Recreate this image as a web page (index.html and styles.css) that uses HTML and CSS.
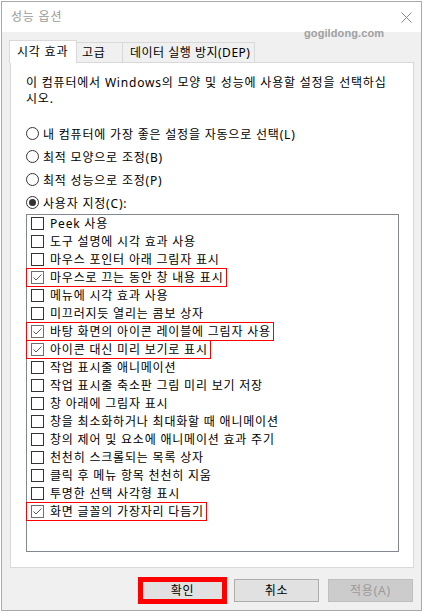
FILE: index.html
```html
<!DOCTYPE html>
<html lang="ko">

<head>
    <meta charset="UTF-8">
    <meta name="viewport" content="width=device-width, initial-scale=1.0">
    <title>성능 옵션</title>
    <link rel="stylesheet" href="styles.css">
</head>

<body>
    <div class="win">
        <div class="titlebar">
            <span class="title">성능 옵션</span>
            <svg class="close" width="11" height="11" viewBox="0 0 11 11">
                <path d="M0.5 0.5L10.5 10.5M10.5 0.5L0.5 10.5" stroke="#8a8a8a" stroke-width="1" fill="none" />
            </svg>
        </div>
        <div class="mark-site">gogildong.com</div>

        <div class="content">
            <div class="tabs">
                <div class="tab active">시각 효과</div>
                <div class="tab tab2">고급</div>
                <div class="tab tab3">데이터 실행 방지(DEP)</div>
            </div>
            <div class="panel">
                <p class="desc">이 컴퓨터에서 Windows의 모양 및 성능에 사용할 설정을 선택하십<br>시오.</p>

                <div class="radios">
                    <div class="radio"><span class="dot"></span>내 컴퓨터에 가장 좋은 설정을 자동으로 선택(L)</div>
                    <div class="radio"><span class="dot"></span>최적 모양으로 조정(B)</div>
                    <div class="radio"><span class="dot"></span>최적 성능으로 조정(P)</div>
                    <div class="radio on"><span class="dot"></span>사용자 지정(C):</div>
                </div>

                <ul class="list">
                    <li><span class="item"><span class="box"></span>Peek 사용</span></li>
                    <li><span class="item"><span class="box"></span>도구 설명에 시각 효과 사용</span></li>
                    <li><span class="item"><span class="box"></span>마우스 포인터 아래 그림자 표시</span></li>
                    <li><span class="item on"><span class="box"><svg width="11" height="11" viewBox="0 0 11 11"><path d="M1.5 5.5L4 8L9.5 2.5" stroke="#5a5a5a" stroke-width="1" fill="none" /></svg></span>마우스로 끄는 동안 창 내용 표시</span></li>
                    <li><span class="item"><span class="box"></span>메뉴에 시각 효과 사용</span></li>
                    <li><span class="item"><span class="box"></span>미끄러지듯 열리는 콤보 상자</span></li>
                    <li><span class="item on"><span class="box"><svg width="11" height="11" viewBox="0 0 11 11"><path d="M1.5 5.5L4 8L9.5 2.5" stroke="#5a5a5a" stroke-width="1" fill="none" /></svg></span>바탕 화면의 아이콘 레이블에 그림자 사용</span></li>
                    <li><span class="item on"><span class="box"><svg width="11" height="11" viewBox="0 0 11 11"><path d="M1.5 5.5L4 8L9.5 2.5" stroke="#5a5a5a" stroke-width="1" fill="none" /></svg></span>아이콘 대신 미리 보기로 표시</span></li>
                    <li><span class="item"><span class="box"></span>작업 표시줄 애니메이션</span></li>
                    <li><span class="item"><span class="box"></span>작업 표시줄 축소판 그림 미리 보기 저장</span></li>
                    <li><span class="item"><span class="box"></span>창 아래에 그림자 표시</span></li>
                    <li><span class="item"><span class="box"></span>창을 최소화하거나 최대화할 때 애니메이션</span></li>
                    <li><span class="item"><span class="box"></span>창의 제어 및 요소에 애니메이션 효과 주기</span></li>
                    <li><span class="item"><span class="box"></span>천천히 스크롤되는 목록 상자</span></li>
                    <li><span class="item"><span class="box"></span>클릭 후 메뉴 항목 천천히 지움</span></li>
                    <li><span class="item"><span class="box"></span>투명한 선택 사각형 표시</span></li>
                    <li><span class="item on"><span class="box"><svg width="11" height="11" viewBox="0 0 11 11"><path d="M1.5 5.5L4 8L9.5 2.5" stroke="#5a5a5a" stroke-width="1" fill="none" /></svg></span>화면 글꼴의 가장자리 다듬기</span></li>
                </ul>
            </div>

            <div class="buttons">
                <button class="btn ok">확인</button>
                <button class="btn">취소</button>
                <button class="btn off">적용(A)</button>
            </div>
        </div>
    </div>
</body>

</html>
```

FILE: styles.css
```css
* {
    padding: 0;
    margin: 0;
    box-sizing: border-box;
}

ul,
li {
    list-style: none;
}

body {
    background: #fff;
    font-family: "Noto Sans", "Noto Sans CJK KR", sans-serif;
    font-size: 12px;
    letter-spacing: 0.8px;
    color: #000;
}

.win {
    position: relative;
    width: 421px;
    height: 610px;
    margin: 1px 0 0 1px;
    border: 1px solid #a9a9a9;
    display: flex;
    flex-direction: column;
}

.titlebar {
    height: 30px;
    background: #fff;
    display: flex;
    align-items: center;
    justify-content: space-between;
    padding: 0 9px 0 9px;
}

.title {
    color: #9a9a9a;
    line-height: 16px;
}

.close {
    display: block;
}

/* 워터마크 */
.mark-site {
    position: absolute;
    left: 302px;
    top: 24px;
    font-family: "Liberation Sans", sans-serif;
    font-weight: bold;
    font-size: 11px;
    letter-spacing: 0.1px;
    color: #a0a0a0;
    line-height: 14px;
}

.content {
    flex: 1;
    background: #f0f0f0;
    padding: 8px 8px 8px 7px;
    display: flex;
    flex-direction: column;
}

.tabs {
    display: flex;
    align-items: flex-end;
    height: 23px;
    margin-bottom: -1px;
    position: relative;
    z-index: 1;
}

.tab {
    height: 21px;
    line-height: 20px;
    border: 1px solid #d9d9d9;
    border-left: none;
    background: #f0f0f0;
    white-space: nowrap;
}

.tab.active {
    height: 23px;
    line-height: 22px;
    width: 68px;
    padding-left: 7px;
    background: #fff;
    border-left: 1px solid #d9d9d9;
    border-bottom: none;
}

.tab2 {
    width: 46px;
    padding-left: 5px;
}

.tab3 {
    width: 132px;
    padding-left: 7px;
    letter-spacing: 0.5px;
}

.panel {
    height: 506px;
    width: 404px;
    margin-left: 1px;
    background: #fff;
    border: 1px solid #d9d9d9;
    padding: 12px 0 0 15px;
}

.desc {
    line-height: 16px;
    white-space: nowrap;
}

.radios {
    margin-top: 15px;
}

.radio {
    height: 23px;
    display: flex;
    align-items: center;
    gap: 4px;
    white-space: nowrap;
}

.dot {
    width: 13px;
    height: 13px;
    border: 1px solid #333;
    border-radius: 50%;
    background: #fff;
    display: flex;
    align-items: center;
    justify-content: center;
}

.radio.on .dot::after {
    content: "";
    width: 7px;
    height: 7px;
    border-radius: 50%;
    background: #333;
}

.list {
    width: 373px;
    height: 338px;
    border: 1px solid #828790;
    background: #fff;
}

.list li {
    height: 18px;
}

.item {
    display: inline-flex;
    align-items: center;
    height: 17px;
    padding: 0 2px 0 4px;
    gap: 6px;
    white-space: nowrap;
    line-height: 16px;
}

.item.on {
    outline: 1px solid #ff0000;
}

.box {
    width: 13px;
    height: 13px;
    border: 1px solid #333;
    background: #fff;
    display: flex;
    align-items: center;
    justify-content: center;
}

.item.on .box {
    border-color: #6e6e6e;
}

.box svg {
    display: block;
}

.buttons {
    margin-top: 11px;
    display: flex;
    justify-content: flex-end;
    gap: 9px;
    padding-right: 0;
}

.btn {
    width: 85px;
    height: 23px;
    border: 1px solid #adadad;
    background: #e1e1e1;
    font-family: "Noto Sans", "Noto Sans CJK KR", sans-serif;
    font-size: 12px;
    letter-spacing: 0.8px;
    color: #000;
    line-height: 16px;
}

.btn.ok {
    border: 3px solid #ff0000;
    outline: 2px solid #ff0000;
}

.btn.off {
    background: #cccccc;
    border-color: #bfbfbf;
    color: #9a9a9a;
}
```
